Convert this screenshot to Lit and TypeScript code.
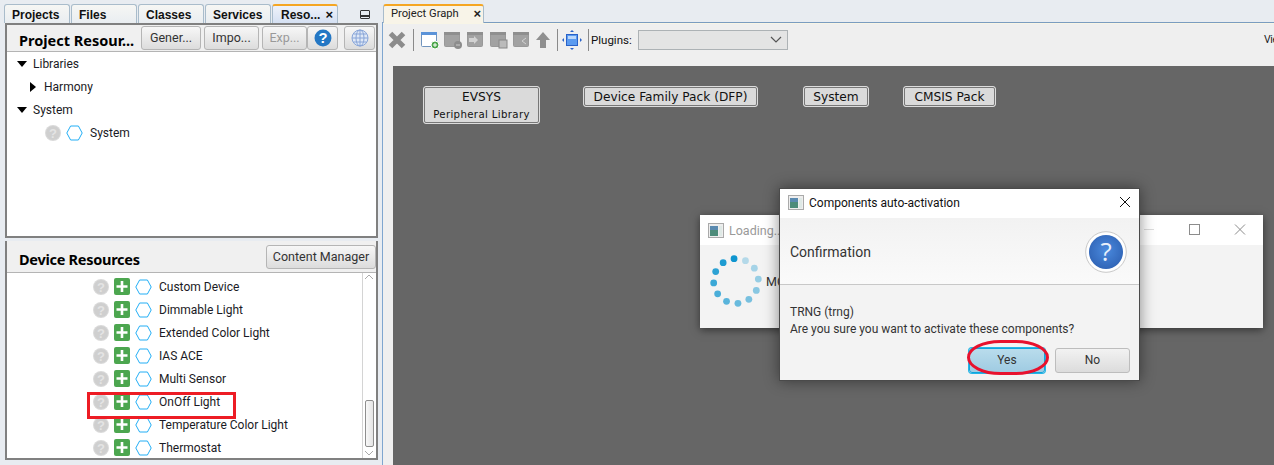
import { LitElement, html, css, svg } from "lit";
import { customElement } from "lit/decorators.js";

const qIcon = () => html`<svg class="q" width="16" height="16" viewBox="0 0 16 16"><circle cx="8" cy="8" r="8" fill="#dadada"/><circle cx="8" cy="8" r="7" fill="#cfcfcf"/><text x="8" y="12.5" text-anchor="middle" font-size="13" font-weight="700" font-family="Liberation Sans" fill="#e4e4e4">?</text></svg>`;
const hexIcon = () => html`<svg class="hex" width="17" height="16" viewBox="0 0 17 16"><polygon points="0.8,8 4.6,1 12.4,1 16.2,8 12.4,15 4.6,15" fill="#fff" stroke="#22aef5" stroke-width="1"/></svg>`;
const plusIcon = () => html`<svg class="plus" width="16" height="17" viewBox="0 0 16 17"><rect width="16" height="17" rx="2" fill="#4ca64f"/><path d="M8 3v11M2.5 8.5h11" stroke="#fff" stroke-width="2.6"/></svg>`;
const winIcon = (extra: unknown, bar = "#8f8f8f", body = "#a2a2a2", edge = "#999") => html`<svg class="tool" width="20" height="20" viewBox="0 0 20 20"><rect x="1.5" y="2.5" width="15" height="14" rx="1" fill="${body}" stroke="${edge}"/><rect x="1" y="2" width="16" height="3" fill="${bar}"/>${extra}</svg>`;

const rows = ["Custom Device", "Dimmable Light", "Extended Color Light", "IAS ACE", "Multi Sensor", "OnOff Light", "Temperature Color Light", "Thermostat"];
const spinner = Array.from({ length: 12 }, (_, i) => {
  const a = (-95 + i * -30) * Math.PI / 180;
  return { x: 36 + 22.4 * Math.cos(a), y: 36 + 22.4 * Math.sin(a), o: 1 - i * 0.066 };
});

@customElement("app-root")
export class AppRoot extends LitElement {
  static styles = css`
    :host { display: block; width: 1274px; height: 465px; overflow: hidden; position: relative; background: #e8ecf1; font-family: Roboto, "Open Sans", sans-serif; font-size: 12px; color: #1a1a24; }
    * { box-sizing: border-box; }
    .root { display: flex; width: 1274px; height: 465px; padding-top: 4px; }
    .left { width: 378px; margin-left: 4px; flex: none; display: flex; flex-direction: column; }
    .right { flex: 1; min-width: 0; display: flex; flex-direction: column; }
    .tabs { display: flex; height: 19px; flex: none; }
    .tab { height: 19px; width: 66px; margin-right: 1px; border: 1px solid #a9bccb; border-bottom: 0; border-radius: 3px 3px 0 0; background: linear-gradient(#f6f6f4, #e9edf1); font: 700 12px "Liberation Sans", sans-serif; padding: 3px 0 0 7px; color: #111; white-space: nowrap; }
    .tab.active { border-top: 2px solid #f5a623; background: linear-gradient(#eef2fa, #d5e0f2); display: flex; justify-content: space-between; padding-right: 4px; padding-left: 8px; padding-top: 2px; font-size: 12px; }
    .x { font: 700 13px "Liberation Sans", sans-serif; line-height: 14px; }
    .minbox { margin-left: 21px; margin-top: 6px; width: 10px; height: 9px; border: 1px solid #333; border-radius: 1px; background: linear-gradient(transparent 4px, #333 4px, #333 6px, transparent 6px); }
    .stack { width: 373px; margin-left: 1px; flex: none; background: #f0f0f0; border: 2px solid #808080; border-bottom: 0; display: flex; flex-direction: column; }
    .stack.two { border-top: 0; height: 219px; border-bottom: 2px solid #808080; margin-top: 3px; }
    .head { height: 26px; display: flex; align-items: center; background: #f0f0f0; flex: none; }
    .two .head { height: 31px; align-items: flex-start; }
    .title { flex: 1; padding-left: 12px; font: 700 14.5px "Noto Sans", sans-serif; color: #000; white-space: nowrap; padding-top: 3px; }
    .two .title { padding-top: 8px; letter-spacing: -0.27px; }
    .btn { height: 24px; border: 1px solid #b5b5b5; border-radius: 3px; background: linear-gradient(#f7f7f7, #dcdcdc); display: flex; align-items: center; justify-content: center; font-size: 12.5px; color: #333; flex: none; padding-bottom: 2px; }
    .gen { width: 60px; } .imp { width: 55px; margin-left: 3px; } .exp { width: 45px; margin-left: 3px; color: #999; } .help { width: 31px; margin-right: 6px; padding-bottom: 0; } .globe { width: 31px; margin-right: 1px; padding-bottom: 0; }
    .tree { height: 187px; background: #fff; border-top: 1px solid #b4b4b4; border-bottom: 2px solid #808080; }
    .row { height: 23px; display: flex; align-items: center; white-space: nowrap; font-size: 12px; }
    .row.l1 { padding-left: 10px; } .row.l2 { padding-left: 23px; } .row.l3 { padding-left: 38px; }
    .tri-d { width: 0; height: 0; border-left: 5px solid transparent; border-right: 5px solid transparent; border-top: 6px solid #000; margin-right: 6px; }
    .tri-r { width: 0; height: 0; border-top: 5px solid transparent; border-bottom: 5px solid transparent; border-left: 6px solid #000; margin-right: 8px; margin-left: 0; }
    .row .q { margin-right: 5px; flex: none; }
    .row .hex { margin-right: 7px; flex: none; }
    .list { height: 186px; background: #fff; border-top: 1px solid #b4b4b4; display: flex; }
    .items { flex: 1; padding: 2px 0 0 86px; overflow: hidden; }
    .items .plus { margin-right: 5px; flex: none; }
    .sb { width: 14px; border-left: 1px solid #d4d4d4; display: flex; flex-direction: column; justify-content: flex-end; align-items: center; position: relative; background: #fff; }
    .thumb { width: 9px; height: 47px; border: 1px solid #8e8e8e; border-radius: 2px; background: linear-gradient(90deg, #f8f8f8, #e4e4e4); margin-bottom: 11px; }
    .arrow { position: absolute; left: 2px; width: 8px; height: 8px; }
    .up { top: 0; } .down { bottom: 1px; }
    .cm { width: 110px; margin-top: 4px; }
    .rtabs { height: 19px; flex: none; border-bottom: 1px solid #7a9cc0; padding-left: 1px; }
    .rtab { width: 101px; height: 19px; border: 1px solid #a9bccb; border-top: 2px solid #f5a623; border-bottom: 0; border-radius: 3px 3px 0 0; background: #f8f4e8; display: flex; justify-content: space-between; padding: 1px 2px 0 7px; font-size: 11.2px; color: #222; }
    .rbody { flex: 1; min-height: 0; border-left: 1px solid #7fa6cf; display: flex; flex-direction: column; background: #efefef; }
    .toolbar { height: 43px; flex: none; display: flex; align-items: center; padding: 0 0 10px 3px; position: relative; border-top: 1px solid #f8f5e6; }
    .tool { flex: none; margin-right: 3px; }
    .tool.kill { margin-right: 0; }
    .tool.upa { margin-right: 1px; }
    .tool.fit { margin: 0 1px 0 -2px; }
    .sep { width: 1px; height: 22px; background: #8a8a8a; margin: 0 6px 0 5px; flex: none; }
    .sep.last { margin-right: 2px; }
    .plug { font-size: 11.5px; color: #111; margin-right: 10px; flex: none; width: 37px; white-space: nowrap; }
    .combo { width: 150px; height: 20px; background: #e4e4e4; border: 1px solid #adb2b5; position: relative; flex: none; }
    .combo svg { position: absolute; right: 5px; top: 5px; }
    .vie { position: absolute; left: 881px; top: 9px; font-size: 10.5px; letter-spacing: -.4px; white-space: nowrap; }
    .graph { flex: 1; background: #666; margin-left: 10px; position: relative; }
    .node { position: absolute; top: 20px; border: 1px solid #dcdcdc; outline: 1px solid #777; outline-offset: -2px; border-radius: 3px; background: #dadada; color: #111; font: 12.2px "DejaVu Sans", sans-serif; height: 21px; display: flex; align-items: center; justify-content: center; white-space: nowrap; }
    .node.big { height: 38px; flex-direction: column; gap: 5px; }
    .node small { font-size: 10.2px; letter-spacing: .35px; }
    .n1 { left: 30px; width: 117px; } .n2 { left: 190px; width: 175px; } .n3 { left: 410px; width: 66px; } .n4 { left: 510px; width: 93px; }
    .win { position: absolute; background: #f3f3f3; }
    .loading { left: 700px; top: 215px; width: 563px; height: 113px; box-shadow: 0 2px 8px rgba(0,0,0,.5); }
    .wtitle { height: 30px; background: #fff; display: flex; align-items: center; position: relative; }
    .wicon { margin: 0 5px 0 8px; flex: none; }
    .loading .wt { color: #999; font-size: 12.5px; }
    .spin { position: absolute; left: 0; top: 30px; }
    .mc { position: absolute; left: 66px; top: 59px; font-size: 12.5px; color: #333; }
    .ctl { position: absolute; top: 0; right: 0; }
    .ctl.dx { right: 7px; top: 6px; }
    .dialog { left: 779px; top: 188px; width: 361px; height: 193px; border: 1px solid #4a4a4a; box-shadow: 0 0 14px rgba(0,0,0,.45); display: flex; flex-direction: column; }
    .dialog .wtitle { height: 29px; flex: none; padding-bottom: 2px; }
    .dialog .wt { color: #111; font-size: 12px; }
    .dhead { height: 67px; flex: none; background: linear-gradient(#f2f2f2, #fafafa); border-bottom: 1px solid #c8c8c8; display: flex; align-items: center; justify-content: space-between; padding: 1px 12px 0 10px; font-size: 14px; color: #333; }
    .dbody { flex: 1; padding: 19px 10px 0 10px; font-size: 12px; line-height: 17px; color: #333; }
    .dbtns { display: flex; justify-content: flex-end; gap: 10px; margin: 10px -1px 0 0; }
    .dbtn { width: 75px; height: 25px; border: 1px solid #bdbdbd; border-radius: 3px; background: linear-gradient(#f2f2f2, #dcdcdc); display: flex; align-items: center; justify-content: center; color: #333; font-size: 12px; }
    .dbtn.yes { border: 1px solid #10a5dc; background: linear-gradient(#b9dcec, #9fcbe2); width: 76px; box-shadow: 0 0 0 1px #25b5e6; }
    .mark { position: absolute; left: 0; top: 0; pointer-events: none; }
  `;

  private treeRow(cls: string, tri: string, label: string) {
    return html`<div class="row ${cls}"><span class="${tri}"></span>${label}</div>`;
  }

  private winGlyph() {
    return html`<svg class="wicon" width="16" height="15" viewBox="0 0 16 15"><rect x=".5" y=".5" width="15" height="14" fill="#eee" stroke="#aaa"/><rect x="2" y="3" width="8" height="10" fill="#4d8c7a"/><rect x="2" y="3" width="8" height="4" fill="#5a8ab0"/><rect x="11" y="3" width="3" height="10" fill="#dfe9e6"/></svg>`;
  }

  render() {
    return html`
      <div class="root">
        <div class="left">
          <div class="tabs">
            <div class="tab">Projects</div><div class="tab">Files</div><div class="tab">Classes</div><div class="tab">Services</div>
            <div class="tab active"><span>Reso...</span><span class="x">×</span></div>
            <div class="minbox"></div>
          </div>
          <div class="stack">
            <div class="head">
              <div class="title">Project Resour...</div>
              <div class="btn gen">Gener...</div><div class="btn imp">Impo...</div><div class="btn exp">Exp...</div>
              <div class="btn help"><svg width="18" height="18" viewBox="0 0 17 17"><circle cx="8.5" cy="8.5" r="8" fill="#2477c4"/><text x="8.5" y="13.5" text-anchor="middle" font-size="14" font-weight="700" font-family="Liberation Sans" fill="#fff">?</text></svg></div>
              <div class="btn globe"><svg width="18" height="18" viewBox="0 0 18 18" fill="none" stroke="#88a5d8"><circle cx="9" cy="9" r="8" fill="#dfe8f6"/><ellipse cx="9" cy="9" rx="4" ry="8"/><path d="M1 9h16M2.5 5h13M2.5 13h13M9 1v16"/></svg></div>
            </div>
            <div class="tree">
              ${this.treeRow("l1", "tri-d", "Libraries")}
              ${this.treeRow("l2", "tri-r", "Harmony")}
              ${this.treeRow("l1", "tri-d", "System")}
              <div class="row l3">${qIcon()}${hexIcon()}System</div>
            </div>
          </div>
          <div class="stack two">
            <div class="head">
              <div class="title">Device Resources</div>
              <div class="btn cm">Content Manager</div>
            </div>
            <div class="list">
              <div class="items">
                ${rows.map((r) => html`<div class="row">${qIcon()}${plusIcon()}${hexIcon()}${r}</div>`)}
              </div>
              <div class="sb">
                <svg class="arrow up" viewBox="0 0 8 8"><path d="M0 6l4-4 4 4" fill="none" stroke="#aaa"/></svg>
                <div class="thumb"></div>
                <svg class="arrow down" viewBox="0 0 8 8"><path d="M0 2l4 4 4-4" fill="none" stroke="#aaa"/></svg>
              </div>
            </div>
          </div>
        </div>
        <div class="right">
          <div class="rtabs"><div class="rtab"><span>Project Graph</span><span class="x">×</span></div></div>
          <div class="rbody">
            <div class="toolbar">
              <svg class="tool kill" width="22" height="22" viewBox="0 0 22 22"><path d="M4.5 4.5l13 13M17.5 4.5l-13 13" stroke="#8c8c8c" stroke-width="5"/></svg>
              <div class="sep"></div>
              ${winIcon(svg`<circle cx="15" cy="15" r="4" fill="#4aa54a" stroke="#fff"/><path d="M13 15h4M15 13v4" stroke="#fff"/>`, "#5b93d8", "#fff", "#6f93bd")}
              ${winIcon(svg`<circle cx="15" cy="15" r="4" fill="#8c8c8c"/><path d="M13 15h4" stroke="#ccc"/>`)}
              ${winIcon(svg`<path d="M3 8h5V6l4 4-4 4v-2H3z" fill="#d2d2d2"/>`)}
              ${winIcon(svg`<rect x="10" y="10" width="8" height="8" fill="#bbb" stroke="#888"/>`)}
              ${winIcon(svg`<path d="M14 8l-4 3 4 3" fill="none" stroke="#d2d2d2"/>`)}
              <svg class="tool upa" width="16" height="20" viewBox="0 0 16 20"><path d="M8 2l7 8h-4v8H5v-8H1z" fill="#8f8f8f"/></svg>
              <div class="sep"></div>
              <svg class="tool fit" width="20" height="20" viewBox="0 0 20 20"><rect x="4.5" y="4.5" width="11" height="11" fill="#5b9bf0" stroke="#2a62c8"/><rect x="6" y="6" width="8" height="3" fill="#bcd8fb"/><path d="M10 0l2 2H8zM10 20l2-2H8zM0 10l2-2v4zM20 10l-2-2v4z" fill="#2a62c8"/></svg>
              <div class="sep last"></div>
              <div class="plug">Plugins:</div>
              <div class="combo"><svg width="12" height="8" viewBox="0 0 12 8"><path d="M1 1l5 5 5-5" fill="none" stroke="#555" stroke-width="1.2"/></svg></div>
              <div class="vie">View</div>
            </div>
            <div class="graph">
              <div class="node big n1"><span>EVSYS</span><small>Peripheral Library</small></div>
              <div class="node n2">Device Family Pack (DFP)</div>
              <div class="node n3">System</div>
              <div class="node n4">CMSIS Pack</div>
            </div>
          </div>
        </div>
      </div>

      <div class="win loading">
        <div class="wtitle">${this.winGlyph()}<span class="wt">Loading...</span>
          <svg class="ctl" width="130" height="30" viewBox="0 0 130 30" fill="none"><path d="M11 14.5h10" stroke="#ddd"/><rect x="56.5" y="9.5" width="10" height="10" stroke="#8c8c8c"/><path d="M102 9.5l10 10M112 9.5l-10 10" stroke="#8c8c8c"/></svg>
        </div>
        <svg class="spin" width="72" height="72" viewBox="0 0 72 72">
          ${spinner.map((d) => svg`<circle cx="${d.x}" cy="${d.y}" r="3.4" fill="#0e95cf" opacity="${d.o}"/>`)}
        </svg>
        <div class="mc">MCC</div>
      </div>

      <div class="win dialog">
        <div class="wtitle">${this.winGlyph()}<span class="wt">Components auto-activation</span>
          <svg class="ctl dx" width="14" height="14" viewBox="0 0 14 14"><path d="M2 2l10 10M12 2L2 12" stroke="#111" fill="none"/></svg>
        </div>
        <div class="dhead"><span>Confirmation</span>
          <svg width="42" height="42" viewBox="0 0 42 42"><defs><radialGradient id="g" cx=".5" cy=".45" r=".6"><stop offset="0" stop-color="#4a8ade"/><stop offset="1" stop-color="#2f62b4"/></radialGradient></defs><circle cx="21" cy="21" r="20.3" fill="#fff" stroke="#c8c8c8"/><circle cx="21" cy="21" r="17" fill="url(#g)"/><text x="21" y="30" text-anchor="middle" font-size="26" font-family="Open Sans" fill="#e9f0fa">?</text></svg>
        </div>
        <div class="dbody">
          <div>TRNG (trng)</div>
          <div>Are you sure you want to activate these components?</div>
          <div class="dbtns"><div class="dbtn yes">Yes</div><div class="dbtn">No</div></div>
        </div>
      </div>

      <svg class="mark" width="1274" height="465" fill="none" stroke="#e8112d">
        <rect x="88.5" y="393.5" width="146" height="24" stroke-width="3" stroke="#ed1c24"/>
        <rect x="968.5" y="341.5" width="79" height="32" rx="32" ry="16" stroke-width="3"/>
      </svg>
    `;
  }
}
